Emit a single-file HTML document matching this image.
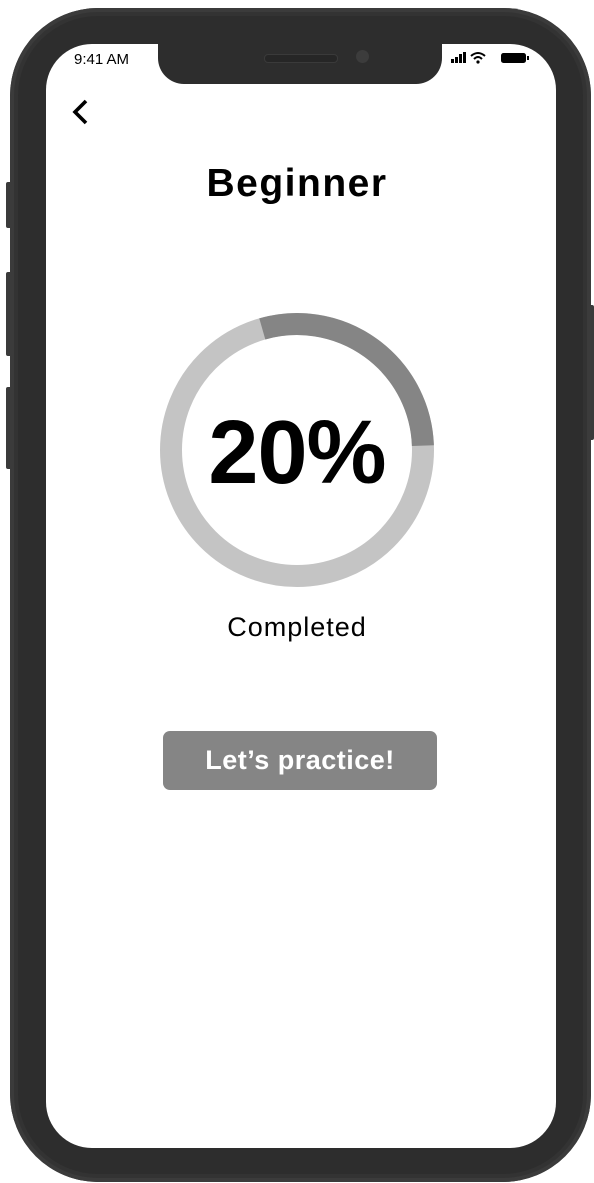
<!DOCTYPE html>
<html><head><meta charset="utf-8"><style>
html,body{margin:0;padding:0;background:#fff;width:594px;height:1183px;overflow:hidden;font-family:"Liberation Sans",sans-serif}
.abs{position:absolute}
</style></head><body>
<div class="abs" style="left:6px;top:182px;width:8px;height:46px;background:#3a3a3a;border-radius:2px"></div>
<div class="abs" style="left:6px;top:272px;width:8px;height:84px;background:#3a3a3a;border-radius:2px"></div>
<div class="abs" style="left:6px;top:387px;width:8px;height:82px;background:#3a3a3a;border-radius:2px"></div>
<div class="abs" style="left:586px;top:305px;width:8px;height:135px;background:#3a3a3a;border-radius:2px"></div>
<div class="abs" style="left:10px;top:8px;width:581px;height:1174px;background:#333;border-radius:88px;box-shadow:inset 0 0 0 4px #3b3b3b"></div>
<div class="abs" style="left:18px;top:16px;width:565px;height:1158px;background:#2d2d2d;border-radius:80px"></div>
<div class="abs" style="left:46px;top:44px;width:510px;height:1104px;background:#fff;border-radius:46px;overflow:hidden"></div>
<div class="abs" style="left:158px;top:40px;width:284px;height:44px;background:#2d2d2d;border-radius:0 0 26px 26px"></div>
<div class="abs" style="left:264px;top:54px;width:72px;height:7px;background:#262626;border-radius:4px;border:1px solid #3a3a3a"></div>
<div class="abs" style="left:356px;top:50px;width:13px;height:13px;background:#3c3c3c;border-radius:50%"></div>
<div class="abs" style="left:74px;top:51px;font-size:15px;color:#000">9:41 AM</div>
<svg class="abs" style="left:450px;top:50px" width="86" height="16" viewBox="0 0 86 16">
<rect x="1" y="9" width="3" height="4" fill="#000"/><rect x="5" y="7" width="3" height="6" fill="#000"/><rect x="9" y="4" width="3" height="9" fill="#000"/><rect x="13" y="2" width="3" height="11" fill="#000"/>
<path d="M21 6 Q28 0 35 6" stroke="#000" stroke-width="2" fill="none"/><path d="M24 9 Q28 5 32 9" stroke="#000" stroke-width="2" fill="none"/><circle cx="28" cy="12" r="1.6" fill="#000"/>
<rect x="51" y="3" width="25" height="10" rx="2.5" fill="#000"/><rect x="77" y="6" width="2" height="4" fill="#000"/>
</svg>
<svg class="abs" style="left:70px;top:98px" width="24" height="30"><path d="M16 3 L5 14 L16 25" stroke="#000" stroke-width="3.6" fill="none"/></svg>
<div class="abs" style="left:0;width:594px;top:162px;text-align:center;font-size:39px;font-weight:bold;color:#000;letter-spacing:1.5px">Beginner</div>
<svg class="abs" style="left:0;top:0" width="594" height="700">
<circle cx="297" cy="450" r="126" fill="none" stroke="#c4c4c4" stroke-width="22"/>
<path d="M262.3 328.9 A126 126 0 0 1 422.9 445.6" fill="none" stroke="#858585" stroke-width="22"/>
</svg>
<div class="abs" style="left:0;width:594px;top:402px;text-align:center;font-size:90px;font-weight:bold;color:#000;letter-spacing:-1px">20%</div>
<div class="abs" style="left:0;width:594px;top:612px;text-align:center;font-size:27px;color:#000;letter-spacing:1px">Completed</div>
<div class="abs" style="left:163px;top:731px;width:274px;height:59px;background:#858585;border-radius:7px;color:#fff;font-size:27px;font-weight:bold;text-align:center;line-height:59px;letter-spacing:0.5px">Let’s practice!</div>
</body></html>
